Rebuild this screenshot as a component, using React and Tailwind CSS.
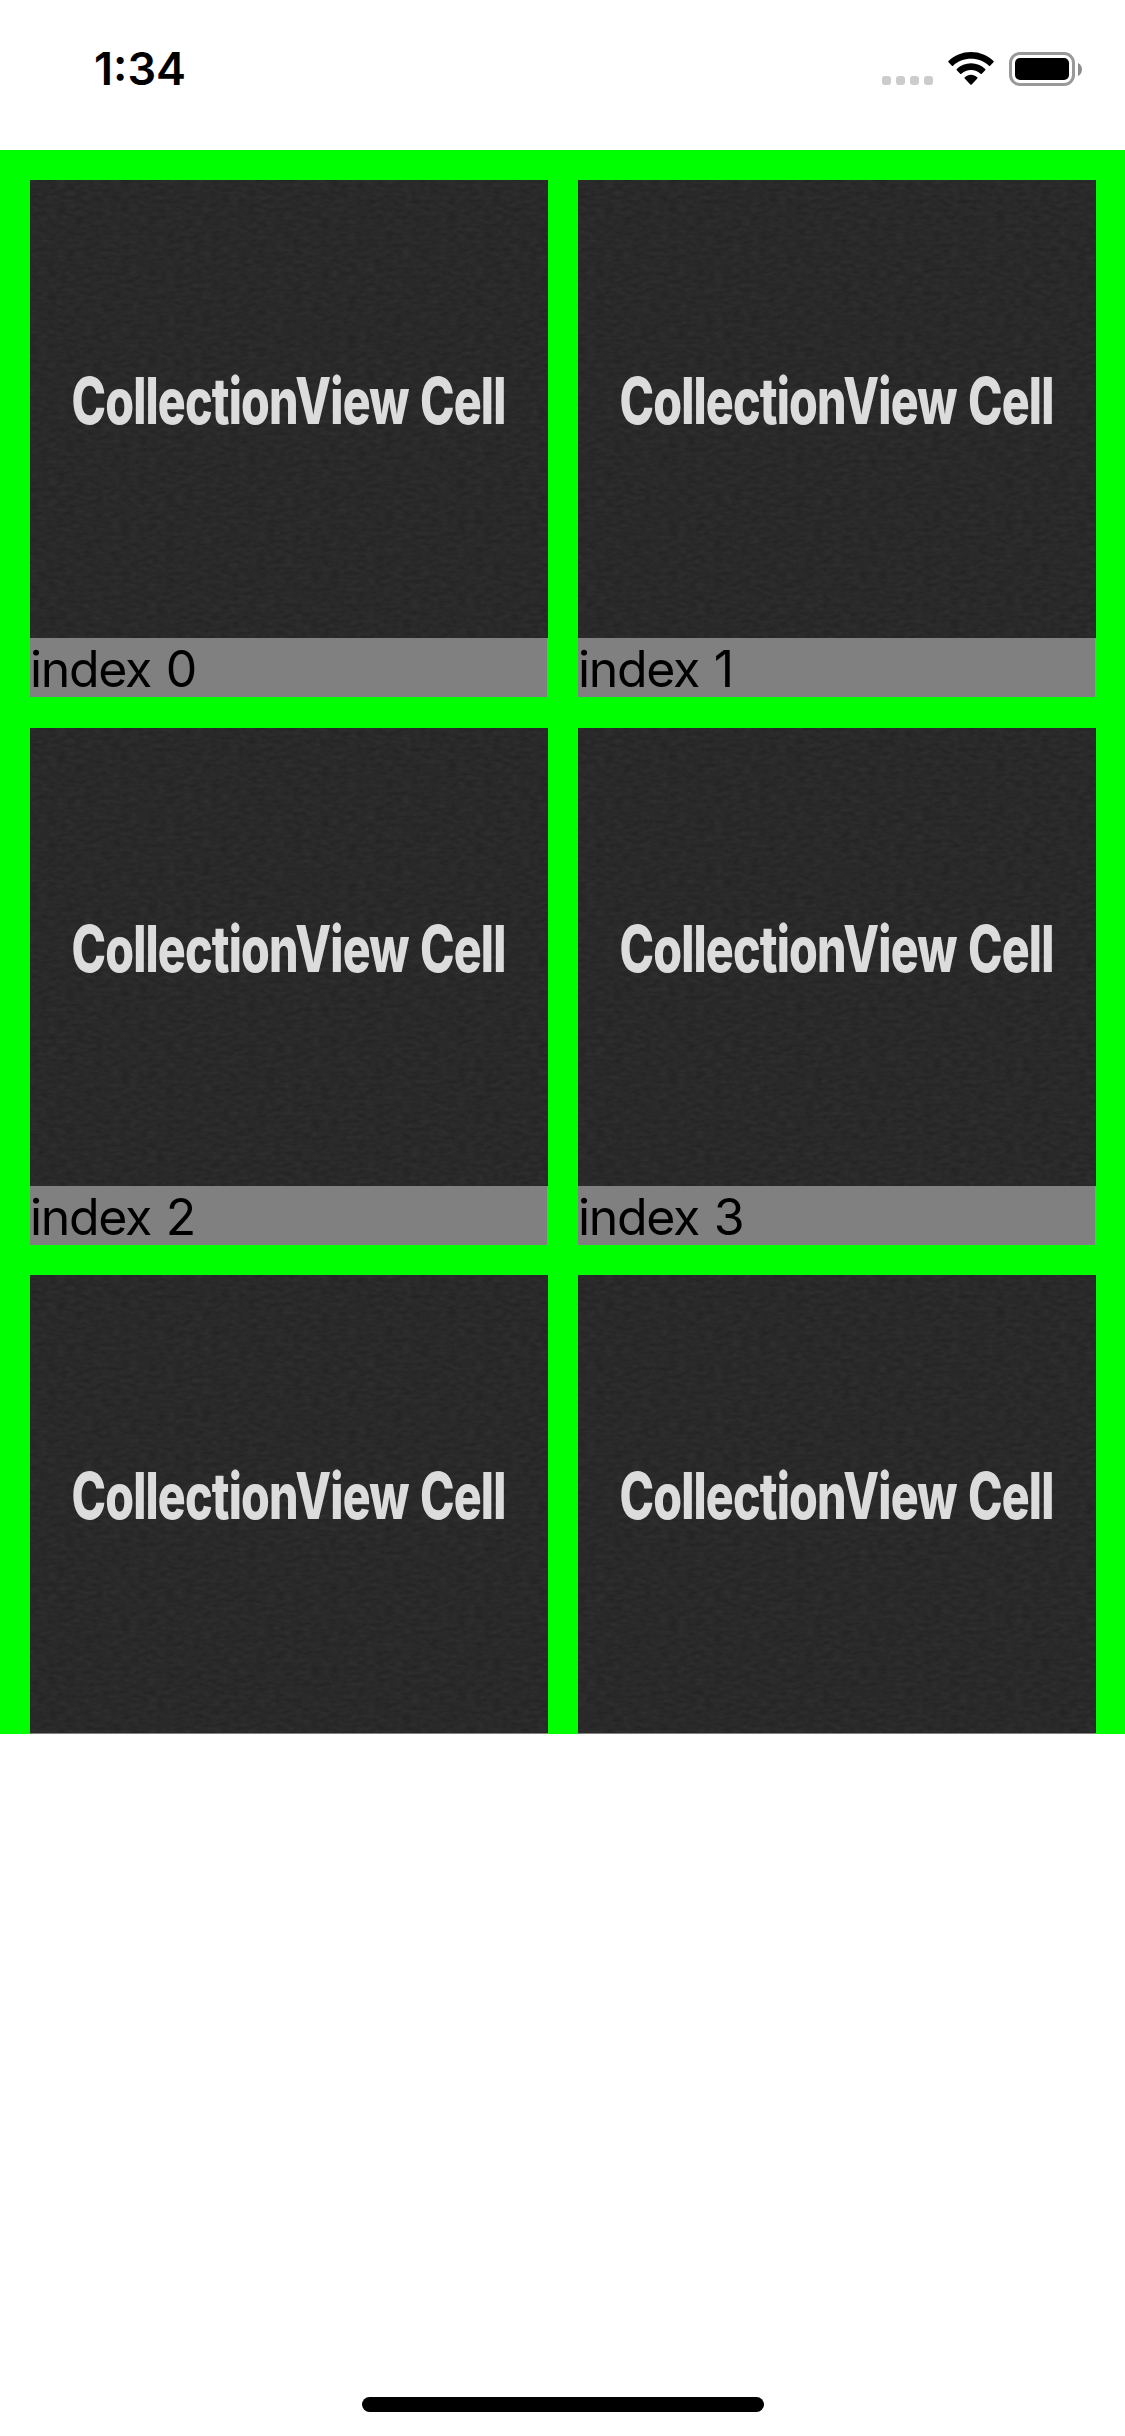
import React from "react";

const rows = [
  { height: "h-[518px]", items: [0, 1] },
  { height: "h-[517px]", items: [2, 3] },
  { height: "h-[517px]", items: [4, 5] },
];

// ---------- status bar ----------
const CellularDots = () => (
  <div className="flex gap-[5px]">
    {[0, 1, 2, 3].map((i) => (
      <div key={i} className="h-[9px] w-[9px] rounded-[3px] bg-[#cccccc]" />
    ))}
  </div>
);

const WifiIcon = () => (
  <svg className="h-[34px] w-[46px]" viewBox="0 0 46 34">
    <path d="M23 0C31.900 0 39.800 3.400 45.500 9.100Q46 9.700 45.500 10.300L42.100 13.700Q41.500 14.200 40.900 13.700C36.200 9.300 29.900 6.800 23 6.800S9.800 9.300 5.100 13.700Q4.500 14.200 3.900 13.700L.5 10.300Q0 9.700 .5 9.100C6.200 3.400 14.100 0 23 0Z" />
    <path d="M23 11.300C28.500 11.300 33.500 13.400 37.200 17.100Q37.800 17.700 37.200 18.300L33.800 21.700Q33.200 22.200 32.600 21.700C30.100 19.400 26.700 18 23 18S15.900 19.400 13.400 21.700Q12.800 22.200 12.200 21.700L8.800 18.300Q8.200 17.700 8.800 17.100C12.500 13.400 17.500 11.300 23 11.300Z" />
    <path d="M23 22.800C25.300 22.800 27.500 23.700 29.200 25.200Q29.900 25.800 29.300 26.500L23.700 32.400Q23 33.100 22.300 32.400L16.700 26.500Q16.100 25.800 16.800 25.200C18.500 23.700 20.700 22.800 23 22.800Z" />
  </svg>
);

const BatteryIcon = () => (
  <div className="flex items-center">
    <div className="h-[34px] w-[66px] rounded-[11px] border-[3px] border-[#999999] p-[3px]">
      <div className="h-full w-full rounded-[5px] bg-black" />
    </div>
    <svg className="ml-[3px] h-[13px] w-[4px]" viewBox="0 0 4 13">
      <path d="M0 0C2.400 1.200 4 3.600 4 6.500S2.400 11.800 0 13Z" fill="#8c8c8c" />
    </svg>
  </div>
);

const StatusBar = () => (
  <header className="flex h-[150px] shrink-0 items-start justify-between pr-[43px] pl-[94px]">
    <div className="mt-[42px] text-[45px] leading-[54px] font-[560]">1:34</div>
    <div className="mt-[52px] flex">
      <div className="mt-[24px] mr-[15px]">
        <CellularDots />
      </div>
      <WifiIcon />
      <div className="ml-[15px]">
        <BatteryIcon />
      </div>
    </div>
  </header>
);

// ---------- collection ----------
const CellImage = () => (
  <svg className="block h-[458px] w-[518px] shrink-0" viewBox="0 0 518 458">
    <rect width="518" height="458" fill="#292929" />
    <rect width="518" height="458" filter="url(#paper)" />
    <text
      transform="translate(41.500 243.500) scale(0.7 1)"
      fontSize="64"
      fontWeight="800"
      letterSpacing="-1.200"
      wordSpacing="3"
      fill="#dcdcdc"
      textLength="620"
      lengthAdjust="spacingAndGlyphs"
    >
      CollectionView Cell
    </text>
  </svg>
);

const Cell = ({ index }) => (
  <div className="w-[518px]">
    <CellImage />
    <div className="h-[59px] w-[517px] bg-[#808080] text-[50px] leading-[63px] tracking-[-1.3px] [word-spacing:2px]">
      index {index}
    </div>
  </div>
);

export default function App() {
  return (
    <div className="flex h-[2436px] w-[1125px] flex-col bg-white font-['Inter','Liberation_Sans',sans-serif] text-black">
      {/* grainy paper used behind every cell title */}
      <svg className="hidden">
        <defs>
          <filter id="paper" x="0" y="0" width="100%" height="100%" colorInterpolationFilters="sRGB">
            <feTurbulence type="fractalNoise" baseFrequency="0.11 0.25" numOctaves="4" seed="4" />
            <feColorMatrix values="0.065 0 0 0 0.129  0.065 0 0 0 0.129  0.065 0 0 0 0.129  0 0 0 0 1" />
          </filter>
        </defs>
      </svg>

      <StatusBar />

      {/* the last row runs past the bottom of the scroll area */}
      <main className="flex h-[1584px] shrink-0 flex-col gap-[30px] overflow-hidden bg-[#00ff00] pt-[30px] pl-[30px]">
        {rows.map((row) => (
          <div key={row.items[0]} className={`flex shrink-0 gap-[30px] ${row.height}`}>
            {row.items.map((i) => (
              <Cell key={i} index={i} />
            ))}
          </div>
        ))}
      </main>

      <div className="mx-auto mt-auto mb-[24px] h-[15px] w-[402px] rounded-full bg-black" />
    </div>
  );
}
